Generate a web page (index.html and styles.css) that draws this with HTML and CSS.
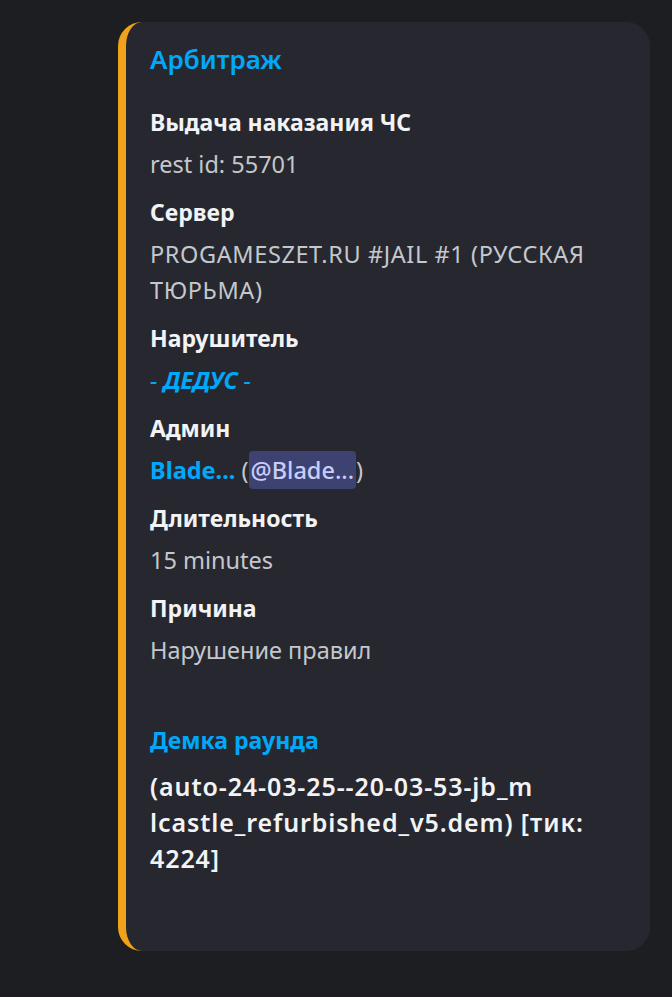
FILE: index.html
```html
<!DOCTYPE html>
<html lang="ru">
<head>
    <meta charset="UTF-8">
    <meta name="viewport" content="width=device-width, initial-scale=1.0">
    <title>Арбитраж</title>
    <link rel="stylesheet" href="styles.css">
</head>
<body>

<div class="embed">
    <div class="embed-title">Арбитраж</div>

    <div class="field">
        <div class="field-name">Выдача наказания ЧС</div>
        <div class="field-value">rest id: 55701</div>
    </div>
    <div class="field">
        <div class="field-name">Сервер</div>
        <div class="field-value caps">PROGAMESZET.RU #JAIL #1 (РУССКАЯ ТЮРЬМА)</div>
    </div>
    <div class="field">
        <div class="field-name">Нарушитель</div>
        <div class="field-value"><em class="link">- <strong>ДЕДУС</strong> -</em></div>
    </div>
    <div class="field">
        <div class="field-name">Админ</div>
        <div class="field-value"><strong class="link">Blade...</strong> (<span class="mention">@Blade...</span>)</div>
    </div>
    <div class="field">
        <div class="field-name">Длительность</div>
        <div class="field-value">15 minutes</div>
    </div>
    <div class="field">
        <div class="field-name">Причина</div>
        <div class="field-value">Нарушение правил</div>
    </div>

    <!-- empty spacer field -->
    <div class="field field-empty"></div>

    <div class="field">
        <div class="field-name link">Демка раунда</div>
        <div class="field-value demo">(auto-24-03-25--20-03-53-jb_m<br>lcastle_refurbished_v5.dem) [тик:<br>4224]</div>
    </div>
</div>

</body>
</html>
```

FILE: styles.css
```css
body {
    margin: 0;
    background-color: #1d1e22;
    font-family: "Noto Sans", "Liberation Sans", sans-serif;
}
.embed {
    margin: 22px 22px 0 118px;
    height: 929px;
    box-sizing: border-box;
    background-color: #27282f;
    border-left: 8px solid #f0a31a;
    border-radius: 24px;
    padding: 19px 16px 0 24px;
}
.embed-title {
    color: #00a8fc;
    font-size: 26px;
    font-weight: 600;
    line-height: 36px;
    margin-bottom: 27px;
}
.field {
    margin-bottom: 12px;
}
.field-name {
    color: #f2f3f5;
    font-size: 23px;
    font-weight: 700;
    line-height: 36px;
    margin-bottom: 6px;
}
.field-value {
    color: #c4c7cd;
    font-size: 23.5px;
    line-height: 36px;
}
.caps {
    letter-spacing: 0.6px;
}
.field-empty {
    height: 30px;
}
.link {
    color: #00a8fc;
}
.mention {
    background-color: #3d4271;
    color: #c9cdfb;
    font-weight: 500;
    border-radius: 4px;
    padding: 3px 2px;
}
.demo {
    color: #f2f3f5;
    font-size: 25px;
    font-weight: 600;
    letter-spacing: 0.9px;
    line-height: 36px;
    margin-top: 10px;
}
```
